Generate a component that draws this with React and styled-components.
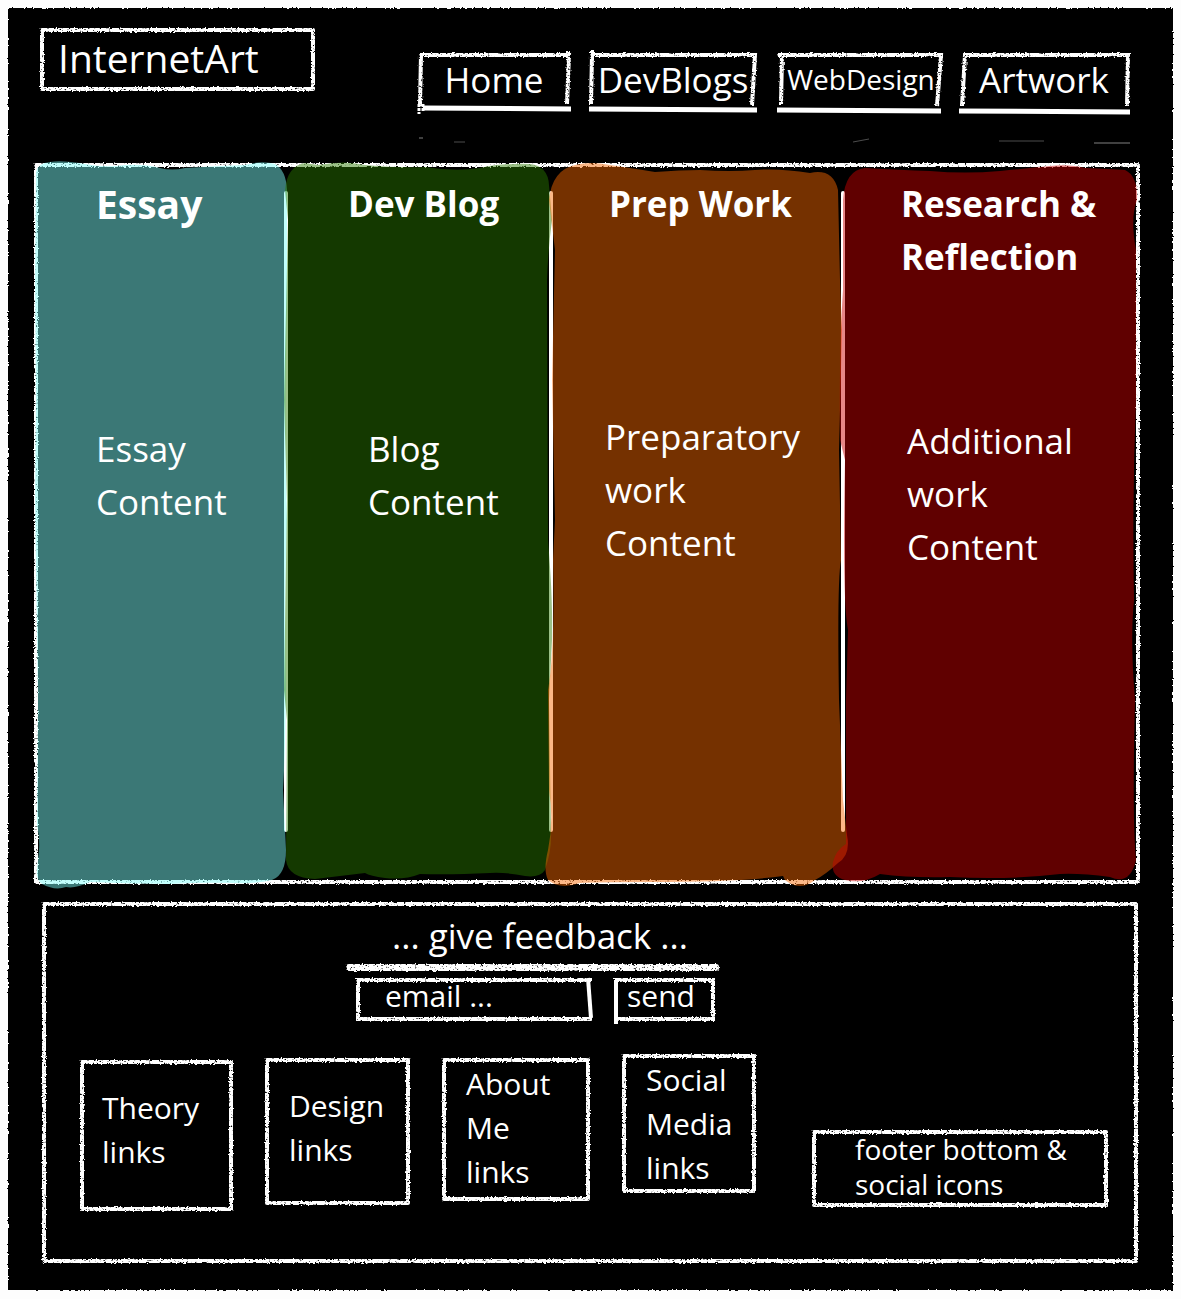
import React from "react";
import styled, { createGlobalStyle, css } from "styled-components";

const GlobalStyle = createGlobalStyle`
  *, *::before, *::after { box-sizing: border-box; }
  body {
    margin: 0;
    background: #fdfdfd;
    color: #fff;
    font-family: "Open Sans", "Noto Sans", sans-serif;
  }
  h1, h2, p { margin: 0; font-weight: 400; }
  a { color: inherit; text-decoration: none; }
`;

const chalkFrame = css`
  position: relative;
  &::before {
    content: "";
    position: absolute;
    inset: 0;
    border: 4px solid #fff;
    border-radius: 2px;
    filter: url(#chalk);
    pointer-events: none;
  }
`;

const Page = styled.div`
  padding: 8px 8px 9px;
`;

const Canvas = styled.div`
  position: relative;
  isolation: isolate;
  padding-bottom: 27px;
  &::before {
    content: "";
    position: absolute;
    inset: 0;
    z-index: -1;
    background: #000;
    filter: url(#edge);
  }
`;

const Header = styled.header`
  display: flex;
  justify-content: space-between;
  align-items: flex-start;
  min-height: 155px;
  padding: 20px 43px 0 32px;
`;

const Logo = styled.h1`
  ${chalkFrame}
  min-width: 275px;
  padding: 3px 18px 7px;
  font-size: 39px;
  line-height: 53px;
`;

const Nav = styled.nav`
  position: relative;
  display: flex;
  gap: 19px;
  margin-top: 24px;
`;

const NavLink = styled.a`
  position: relative;
  display: flex;
  justify-content: center;
  align-items: center;
  width: ${(p) => p.$width}px;
  height: 59px;
  padding: ${(p) => (p.$compact ? "0 0 4px 4px" : "0 2px 4px 0")};
  font-size: ${(p) => (p.$compact ? 28 : 35)}px;
  line-height: 53px;
`;

const Strokes = styled.svg`
  position: absolute;
  inset: 0;
  width: 100%;
  height: 100%;
  overflow: visible;
  fill: none;
  stroke: #fff;
  pointer-events: none;
`;

const Scratches = styled.svg`
  position: absolute;
  top: 80px;
  left: 0;
  width: 100%;
  height: 14px;
  fill: none;
  stroke: #fff;
  pointer-events: none;
`;

const Board = styled.main`
  ${chalkFrame}
  isolation: isolate;
  display: grid;
  grid-template-columns: 248fr 265fr 292fr 293fr;
  min-height: 721px;
  margin: 0 33px 0 26px;
  padding: 4px;
`;

const Column = styled.section`
  position: relative;
  padding-top: 10px;
  & + &::before {
    content: "";
    position: absolute;
    z-index: 0;
    top: 24px;
    bottom: 48px;
    left: -2px;
    width: 4px;
    border-radius: 2px;
    background: #fff;
  }
`;

const Wash = styled.svg`
  position: absolute;
  z-index: 1;
  inset: 0;
  width: 100%;
  height: 100%;
  overflow: visible;
  fill-opacity: 0.47;
  pointer-events: none;
`;

const ColumnTitle = styled.h2`
  position: relative;
  z-index: 2;
  min-height: 233px;
  padding-left: ${(p) => p.$indent}px;
  font-size: ${(p) => (p.$large ? 39 : 35)}px;
  font-weight: 700;
  line-height: 53px;
`;

const ColumnText = styled.p`
  position: relative;
  z-index: 2;
  padding: ${(p) => p.$drop}px 0 0 ${(p) => p.$indent}px;
  font-size: 35px;
  line-height: 53px;
`;

const Line = styled.span`
  display: block;
  white-space: nowrap;
`;

const Footer = styled.footer`
  ${chalkFrame}
  margin: 18px 35px 0 34px;
  padding: 7px 30px 52px 38px;
`;

const Feedback = styled.form`
  width: 373px;
  margin-left: 266px;
`;

const FeedbackTitle = styled.h2`
  position: relative;
  padding: 0 0 9px 46px;
  font-size: 35px;
  line-height: 53px;
  white-space: nowrap;
  &::after {
    content: "";
    position: absolute;
    inset: auto 0 0;
    height: 7px;
    border-radius: 3px;
    background: #fff;
    filter: url(#chalk);
  }
`;

const Fields = styled.div`
  display: flex;
  gap: 22px;
  padding: 7px 4px 0 10px;
`;

const EmailBox = styled.label`
  position: relative;
  flex: 1;
`;

const EmailInput = styled.input`
  display: block;
  width: 100%;
  height: 43px;
  padding: 0 8px 8px 29px;
  border: 0;
  background: transparent;
  color: #fff;
  font: 30px/35px "Open Sans", "Noto Sans", sans-serif;
  &::placeholder { color: #fff; opacity: 1; }
`;

const SendButton = styled.button`
  position: relative;
  width: 101px;
  height: 43px;
  padding: 0 13px 8px;
  border: 0;
  background: transparent;
  color: #fff;
  font: 30px/35px "Open Sans", "Noto Sans", sans-serif;
  text-align: left;
`;

const FooterRow = styled.div`
  display: flex;
  align-items: flex-start;
  justify-content: space-between;
  padding: 33px 0 0;
`;

const LinkGroup = styled.div`
  display: flex;
  align-items: flex-start;
  gap: 32px;
`;

const LinkCard = styled.a`
  ${chalkFrame}
  width: ${(p) => p.$width}px;
  height: ${(p) => p.$height}px;
  margin-top: ${(p) => p.$drop}px;
  padding: ${(p) => (p.$tall ? 4 : 26)}px 0 0 ${(p) => p.$indent}px;
  font-size: 30px;
  line-height: 44px;
`;

const BottomNote = styled.p`
  ${chalkFrame}
  width: 296px;
  margin-top: 76px;
  padding: 2px 0 5px 43px;
  font-size: 28px;
  line-height: 35px;
  white-space: nowrap;
`;

const Defs = styled.svg`
  position: absolute;
  width: 0;
  height: 0;
`;

function Filters() {
  return (
    <Defs aria-hidden="true">
      <filter id="chalk" x="-10" y="-10" width="1200" height="800" filterUnits="userSpaceOnUse" colorInterpolationFilters="sRGB">
        <feTurbulence type="fractalNoise" baseFrequency="0.45 0.65" numOctaves="2" seed="4" result="grain" />
        <feDisplacementMap in="SourceGraphic" in2="grain" scale="3" xChannelSelector="R" yChannelSelector="G" result="rough" />
        <feColorMatrix in="grain" type="matrix" values="0 0 0 0 0  0 0 0 0 0  0 0 0 0 0  0 0 5 0 -0.9" result="holes" />
        <feComposite in="rough" in2="holes" operator="in" />
      </filter>
      <filter id="edge" x="-1%" y="-1%" width="102%" height="102%" colorInterpolationFilters="sRGB">
        <feTurbulence type="fractalNoise" baseFrequency="0.5" numOctaves="2" seed="9" />
        <feDisplacementMap in="SourceGraphic" scale="3" xChannelSelector="R" yChannelSelector="G" />
      </filter>
    </Defs>
  );
}

const navItems = [
  {
    label: "Home",
    width: 152,
    chalk: "M1 54L2 3H150L148 52M149 -1V8",
    base: "M4 56L152 57",
    blob: true,
  },
  { label: "DevBlogs", width: 168, chalk: "M1 52L2 3H165L162 53M2 -2V8", base: "M-1 57L167 58" },
  { label: "WebDesign", width: 164, compact: true, chalk: "M4 53L5 3H164L160 54M0 3H8", base: "M0 58L164 59" },
  { label: "Artwork", width: 170, chalk: "M2 54L5 3H168L167 54", base: "M-1 59L170 60" },
];

const columns = [
  {
    title: ["Essay"],
    text: ["Essay", "Content"],
    titleIndent: 58,
    textIndent: 58,
    drop: 12,
    large: true,
    color: "#7dfffa",
    box: "38 167 248 713",
    path: "M36 172Q38 163 50 162Q62 160 85 164Q105 168 125 165Q145 164 160 168Q172 171 185 168Q215 166 245 165Q262 160 275 164Q286 170 287 190L287 300Q284 420 287 520Q284 600 286 690Q285 760 283 790L286 850Q286 875 272 880Q255 884 235 883Q200 882 170 884Q130 884 90 882Q75 889 66 887Q55 891 42 884Q36 880 37 870L39 850Q40 840 37 825L38 700L35 500L36 400L35 280Z",
  },
  {
    title: ["Dev Blog"],
    text: ["Blog", "Content"],
    titleIndent: 62,
    textIndent: 82,
    drop: 12,
    color: "#2b7a00",
    box: "286 167 265 713",
    path: "M285 190Q287 166 305 163L318 165Q345 160 365 165Q400 168 425 167Q455 172 480 168Q500 163 530 164Q548 166 549 185L552 220Q548 250 547 280L548 540Q553 600 552 640L549 700L551 830Q552 850 545 870Q540 878 525 876Q505 872 490 873Q450 875 420 874Q405 880 385 878Q370 876 365 873Q340 876 315 879Q288 878 286 860L287 720L284 690L287 500L284 400L288 220Z",
  },
  {
    title: ["Prep Work"],
    text: ["Preparatory", "work", "Content"],
    titleIndent: 58,
    textIndent: 54,
    drop: 0,
    color: "#f96800",
    box: "551 167 292 713",
    path: "M549 200Q552 170 575 165Q590 161 610 165Q630 168 655 172Q680 170 700 170Q730 172 755 170Q780 168 810 173Q833 168 838 190L840 280L842 330L839 450L841 560Q837 580 839 700L843 800L847 835Q851 855 838 863Q825 875 815 880Q800 892 785 880L783 876Q740 882 650 882Q600 882 580 883Q560 890 548 880Q543 870 548 850Q554 820 549 790L548 690Q555 650 553 560L555 520L552 380L555 250Z",
  },
  {
    title: ["Research &", "Reflection"],
    text: ["Additional", "work", "Content"],
    titleIndent: 58,
    textIndent: 64,
    drop: 4,
    color: "#cc0000",
    box: "843 167 293 713",
    path: "M843 200Q845 170 865 168Q900 170 930 171Q965 174 1000 171Q1030 168 1050 166Q1070 164 1085 168Q1110 169 1125 170Q1138 176 1137 200Q1130 218 1136 250L1136 400Q1132 500 1134 600Q1130 640 1135 700Q1132 820 1136 860Q1130 886 1110 877Q1080 873 1060 874Q1010 880 950 877Q910 878 880 874Q865 883 850 881Q830 878 833 862Q836 850 846 844L846 700L848 630Q842 600 845 460L840 440Q839 350 843 290Z",
  },
];

const footerLinks = [
  { lines: ["Theory", "links"], width: 153, height: 151, drop: 6, indent: 22 },
  { lines: ["Design", "links"], width: 145, height: 147, drop: 4, indent: 24 },
  { lines: ["About", "Me", "links"], width: 148, height: 143, drop: 4, indent: 24, tall: true },
  { lines: ["Social", "Media", "links"], width: 134, height: 139, drop: 0, indent: 24, tall: true },
];

const toLines = (lines) => lines.map((line) => <Line key={line}>{line}</Line>);

export default function App() {
  return (
    <Page>
      <GlobalStyle />
      <Filters />
      <Canvas>
        <Header>
          <Logo>InternetArt</Logo>
          <Nav aria-label="Main">
            {navItems.map((item) => (
              <NavLink key={item.label} href="#" $width={item.width} $compact={item.compact}>
                <Strokes viewBox={`0 0 ${item.width} 59`} preserveAspectRatio="none" aria-hidden="true">
                  <path d={item.chalk} strokeWidth="4" filter="url(#chalk)" />
                  <path d={item.base} strokeWidth="5" />
                  {item.blob && <path d="M0 52V62M4 52V60" strokeWidth="3" strokeDasharray="3 1" />}
                </Strokes>
                {item.label}
              </NavLink>
            ))}
            <Scratches viewBox="0 0 711 14" preserveAspectRatio="none" aria-hidden="true">
              <path d="M35 10H46M434 10L450 7M580 9H625" strokeOpacity="0.3" />
              <path d="M0 6H4M675 11H711" strokeOpacity="0.5" />
            </Scratches>
          </Nav>
        </Header>

        <Board>
          {columns.map((column) => (
            <Column key={column.title[0]}>
              <Wash viewBox={column.box} preserveAspectRatio="none" fill={column.color} aria-hidden="true">
                <path d={column.path} />
              </Wash>
              <ColumnTitle $indent={column.titleIndent} $large={column.large}>
                {toLines(column.title)}
              </ColumnTitle>
              <ColumnText $indent={column.textIndent} $drop={column.drop}>
                {toLines(column.text)}
              </ColumnText>
            </Column>
          ))}
        </Board>

        <Footer>
          <Feedback onSubmit={(event) => event.preventDefault()}>
            <FeedbackTitle>... give feedback ...</FeedbackTitle>
            <Fields>
              <EmailBox>
                <Strokes viewBox="0 0 236 43" preserveAspectRatio="none" aria-hidden="true">
                  <path d="M236 2H2V41H236" strokeWidth="4" filter="url(#chalk)" />
                  <path d="M232 0L235 40" strokeWidth="4" />
                </Strokes>
                <EmailInput type="email" aria-label="email" placeholder="email ..." />
              </EmailBox>
              <SendButton type="submit">
                <Strokes viewBox="0 0 101 43" preserveAspectRatio="none" aria-hidden="true">
                  <path d="M0 2H99V41H2" strokeWidth="4" filter="url(#chalk)" />
                  <path d="M2 2V46" strokeWidth="4" />
                </Strokes>
                send
              </SendButton>
            </Fields>
          </Feedback>

          <FooterRow>
            <LinkGroup>
              {footerLinks.map((card) => (
                <LinkCard
                  key={card.lines[0]}
                  href="#"
                  $width={card.width}
                  $height={card.height}
                  $drop={card.drop}
                  $indent={card.indent}
                  $tall={card.tall}
                >
                  {toLines(card.lines)}
                </LinkCard>
              ))}
            </LinkGroup>
            <BottomNote>
              <Line>footer bottom &amp;</Line>
              <Line>social icons</Line>
            </BottomNote>
          </FooterRow>
        </Footer>
      </Canvas>
    </Page>
  );
}
